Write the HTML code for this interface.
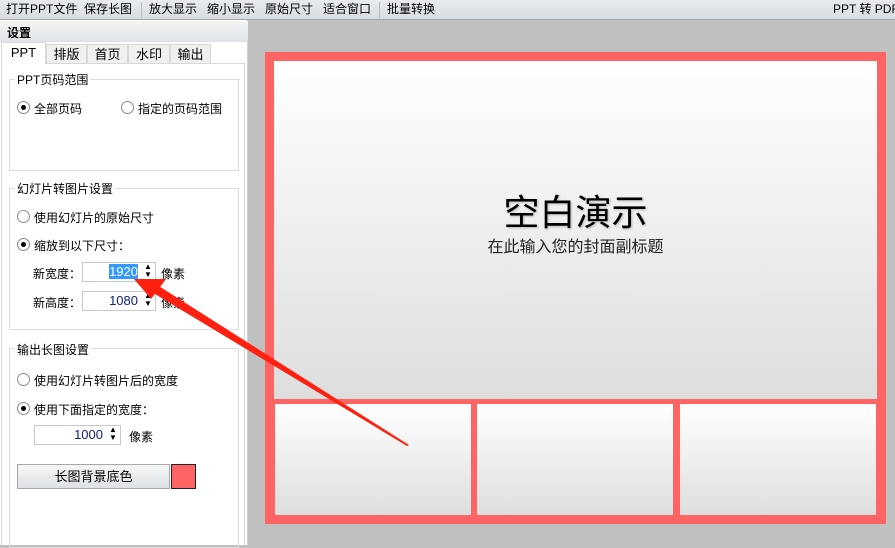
<!DOCTYPE html>
<html><head><meta charset="utf-8"><style>
*{margin:0;padding:0;box-sizing:border-box}
body{width:895px;height:545px;overflow:hidden;background:#c0c0c0;font-family:"Liberation Sans","Noto Sans CJK SC",sans-serif;font-size:12px;color:#000;position:relative}
.a{position:absolute;white-space:nowrap}
.tb{left:0;top:0;width:895px;height:20px;background:linear-gradient(#e8ebee,#d8dde2);border-bottom:1px solid #a9a9a9}
.sep{position:absolute;top:2px;width:1px;height:16px;background:#b8bcc0}
.lp{left:0;top:20px;width:248px;height:525px;background:#fff;border-right:1px solid #d0d0d0}
.hdr{left:0;top:21px;width:248px;height:21px;background:linear-gradient(#f4f5f6,#dfe3e7);font-weight:bold}
.grp{border:1px solid #dcdcdc;position:absolute}
.lg{position:absolute;background:#fff;padding:0 2px}
.rad{position:absolute;width:13px;height:13px;border:1px solid #8a8a8a;border-radius:50%;background:#fff}
.rad.on::after{content:"";position:absolute;left:3px;top:3px;width:5px;height:5px;border-radius:50%;background:#000}
.inp{position:absolute;border:1px solid #c8c8c8;background:#fff;text-align:right;padding-right:17px;font-size:13px;line-height:17px;color:#102080}
.tab{position:absolute;top:44px;height:20px;border:1px solid #d8d8d8;background:#f0f0f0;text-align:center;line-height:19px;font-size:13px}
</style></head><body>
<div class="a tb"></div>
<div class="a" style="left:6px;top:1px;font-size:12px;line-height:17px">打开PPT文件&nbsp;&nbsp;保存长图</div>
<div class="sep" style="left:141px"></div>
<div class="a" style="left:149px;top:1px;line-height:17px">放大显示&nbsp;&nbsp;&nbsp;缩小显示&nbsp;&nbsp;&nbsp;原始尺寸&nbsp;&nbsp;&nbsp;适合窗口</div>
<div class="sep" style="left:379px"></div>
<div class="a" style="left:387px;top:1px;line-height:17px">批量转换</div>
<div class="a" style="left:833px;top:1px;line-height:17px">PPT 转 PDF</div>

<div class="a lp"></div>
<div class="a hdr"><span style="position:absolute;left:7px;top:3px">设置</span></div>
<div class="a" style="left:1px;top:63px;width:244px;height:482px;border:1px solid #d8d8d8;border-bottom:none"></div>
<div class="tab" style="left:1px;width:45px;top:42px;height:22px;background:#fff;border-bottom:none">PPT</div>
<div class="tab" style="left:46px;width:41px">排版</div>
<div class="tab" style="left:87px;width:41px">首页</div>
<div class="tab" style="left:128px;width:42px">水印</div>
<div class="tab" style="left:170px;width:41px">输出</div>

<div class="grp" style="left:9px;top:79px;width:230px;height:92px"></div>
<div class="lg" style="left:15px;top:71px">PPT页码范围</div>
<div class="rad on" style="left:17px;top:101px"></div><div class="a" style="left:34px;top:100px">全部页码</div>
<div class="rad" style="left:121px;top:101px"></div><div class="a" style="left:138px;top:100px">指定的页码范围</div>

<div class="grp" style="left:9px;top:188px;width:230px;height:142px"></div>
<div class="lg" style="left:15px;top:180px">幻灯片转图片设置</div>
<div class="rad" style="left:17px;top:210px"></div><div class="a" style="left:34px;top:209px">使用幻灯片的原始尺寸</div>
<div class="rad on" style="left:17px;top:238px"></div><div class="a" style="left:34px;top:237px">缩放到以下尺寸：</div>
<div class="a" style="left:33px;top:265px">新宽度：</div>
<div class="inp" style="left:82px;top:262px;width:74px;height:20px"><span style="background:#3399ff;color:#fff">1920</span></div>
<div class="a" style="left:144px;top:263px;font-size:8px;line-height:8px">▲<br>▼</div>
<div class="a" style="left:161px;top:265px">像素</div>
<div class="a" style="left:33px;top:294px">新高度：</div>
<div class="inp" style="left:82px;top:291px;width:74px;height:20px">1080</div>
<div class="a" style="left:144px;top:292px;font-size:8px;line-height:8px">▲<br>▼</div>
<div class="a" style="left:161px;top:294px">像素</div>

<div class="grp" style="left:9px;top:348px;width:230px;height:200px"></div>
<div class="lg" style="left:15px;top:341px">输出长图设置</div>
<div class="rad" style="left:17px;top:373px"></div><div class="a" style="left:34px;top:372px">使用幻灯片转图片后的宽度</div>
<div class="rad on" style="left:17px;top:402px"></div><div class="a" style="left:34px;top:401px">使用下面指定的宽度：</div>
<div class="inp" style="left:34px;top:425px;width:87px;height:20px">1000</div>
<div class="a" style="left:109px;top:426px;font-size:8px;line-height:8px">▲<br>▼</div>
<div class="a" style="left:129px;top:428px">像素</div>
<div class="a" style="left:17px;top:464px;width:153px;height:25px;border:1px solid #a8a8a8;background:linear-gradient(#f6f7f8,#dde1e5);text-align:center;line-height:23px;font-size:13px">长图背景底色</div>
<div class="a" style="left:171px;top:464px;width:25px;height:25px;border:1px solid #222;background:#ff6464"></div>

<div class="a" style="left:265px;top:52px;width:621px;height:472px;background:#ff6464"></div>
<div class="a" style="left:274px;top:61px;width:603px;height:338px;background:linear-gradient(#fff,#dedede)"></div>
<div class="a" style="left:274px;top:194px;width:603px;text-align:center;font-size:36px;line-height:38px;text-shadow:1px 1px 2px rgba(0,0,0,.25)">空白演示</div>
<div class="a" style="left:274px;top:238px;width:603px;text-align:center;font-size:16px;line-height:20px;color:#222">在此输入您的封面副标题</div>
<div class="a" style="left:275px;top:404px;width:196px;height:111px;background:linear-gradient(#fff,#dedede)"></div>
<div class="a" style="left:477px;top:404px;width:196px;height:111px;background:linear-gradient(#fff,#dedede)"></div>
<div class="a" style="left:680px;top:404px;width:196px;height:111px;background:linear-gradient(#fff,#dedede)"></div>

<svg class="a" style="left:0;top:0" width="895" height="545">
<polygon points="409,445 407,446 150,291 154,283" fill="#ff2010"/>
<polygon points="134,279 166,279 151,299" fill="#ff2010"/>
</svg>
</body></html>
